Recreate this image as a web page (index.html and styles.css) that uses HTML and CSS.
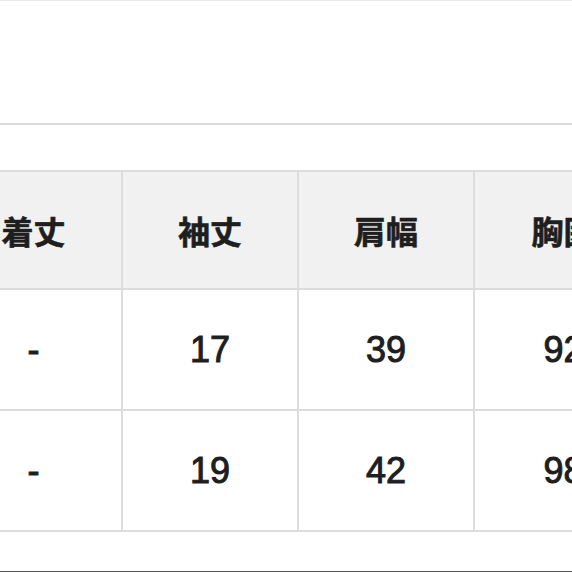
FILE: index.html
```html
<!DOCTYPE html>
<html lang="ja">
<head>
<meta charset="utf-8">
<title>サイズ表</title>
<link rel="stylesheet" href="styles.css">
</head>
<body>
<div class="page">
  <div class="top-rule"></div>
  <div class="title-space"></div>
  <div class="table-wrap">
    <table class="size-table">
      <colgroup>
        <col class="c1"><col class="c2"><col class="c3"><col class="c4">
      </colgroup>
      <thead>
        <tr class="head-row">
          <th>着丈</th><th>袖丈</th><th>肩幅</th><th>胸囲</th>
        </tr>
      </thead>
      <tbody>
        <tr class="body-row">
          <td>-</td><td>17</td><td>39</td><td>92</td>
        </tr>
        <tr class="body-row">
          <td>-</td><td>19</td><td>42</td><td>98</td>
        </tr>
      </tbody>
    </table>
  </div>
  <div class="bottom-edge"></div>
</div>
</body>
</html>
```

FILE: styles.css
```css
html, body {
  margin: 0;
  padding: 0;
  background: #ffffff;
}
body {
  width: 572px;
  height: 572px;
  overflow: hidden;
}
.page {
  width: 572px;
  height: 572px;
  display: flex;
  flex-direction: column;
  overflow: hidden;
}
.top-rule {
  height: 1px;
  background: #e8e8e8;
  flex: none;
}
.title-space {
  height: 122px;
  border-bottom: 2px solid #dadada;
  flex: none;
}
.table-wrap {
  flex: none;
  margin-top: 45px;
  width: 572px;
  overflow: hidden;
}
.size-table {
  margin-left: -56px;
  border-collapse: collapse;
  table-layout: fixed;
  width: 708px;
  border: 2px solid #dcdcdc;
}
.c1 { width: 177px; }
.c2 { width: 176px; }
.c3 { width: 176px; }
.c4 { width: 179px; }
.size-table th,
.size-table td {
  border: 2px solid #dcdcdc;
  padding: 0;
  text-align: center;
  vertical-align: middle;
  color: #1e1e1e;
  white-space: nowrap;
  overflow: hidden;
}
.head-row th {
  height: 116px;
  background: #f1f1f1;
  font-family: "Noto Sans CJK JP", "Noto Sans", sans-serif;
  font-weight: 700;
  font-size: 32px;
  -webkit-text-stroke: 0.6px #1e1e1e;
}
.body-row td {
  height: 119px;
  background: #ffffff;
  font-family: "Liberation Sans", Arial, sans-serif;
  font-weight: 400;
  font-size: 36px;
  -webkit-text-stroke: 1px #1e1e1e;
}
.bottom-edge {
  margin-top: auto;
  height: 1px;
  background: #555555;
  flex: none;
}
```
